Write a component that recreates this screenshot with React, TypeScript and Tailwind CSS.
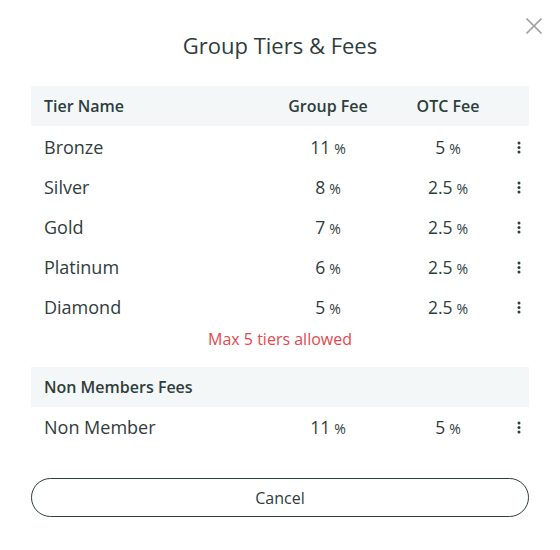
import React from "react";

const tiers = [
  { name: "Bronze", group: "11", otc: "5" },
  { name: "Silver", group: "8", otc: "2.5" },
  { name: "Gold", group: "7", otc: "2.5" },
  { name: "Platinum", group: "6", otc: "2.5" },
  { name: "Diamond", group: "5", otc: "2.5" },
];

function Kebab() {
  return (
    <svg width="4" height="13" viewBox="0 0 4 13" className="block">
      <circle cx="2" cy="2" r="1.5" fill="#2e3d3d" />
      <circle cx="2" cy="6.5" r="1.5" fill="#2e3d3d" />
      <circle cx="2" cy="11" r="1.5" fill="#2e3d3d" />
    </svg>
  );
}

function Pct({ v }: { v: string }) {
  return (
    <span className="whitespace-nowrap">
      <span className="text-[17.5px]">{v}</span>
      <span className="text-[14px] ml-[4px]">%</span>
    </span>
  );
}

function Row({ name, group, otc }: { name: string; group: string; otc: string }) {
  return (
    <div className="grid grid-cols-[247px_100px_20px_100px_1fr] h-[40px] items-center">
      <div className="pl-[13px] text-[18px]">{name}</div>
      <div className="flex justify-center">
        <Pct v={group} />
      </div>
      <div />
      <div className="flex justify-center">
        <Pct v={otc} />
      </div>
      <div className="flex justify-end pr-[8px]">
        <Kebab />
      </div>
    </div>
  );
}

export default function App() {
  return (
    <div
      className="relative w-[560px] h-[550px] bg-white text-[#2e3d3d]"
      style={{ fontFamily: '"Open Sans", "Noto Sans", sans-serif' }}
    >
      <button className="absolute left-[525px] top-[17px] w-[18px] h-[18px] flex items-center justify-center">
        <svg width="16" height="16" viewBox="0 0 16 16">
          <path d="M0.5 0.5L15.5 15.5M15.5 0.5L0.5 15.5" stroke="#a3a3a3" strokeWidth="1.6" />
        </svg>
      </button>

      <div className="pt-[30px] text-center text-[22px] leading-[30px]">Group Tiers &amp; Fees</div>

      <div className="mx-[31px] mt-[26px]">
        <div className="grid grid-cols-[247px_100px_20px_100px_1fr] h-[40px] items-center bg-[#f4f7f7] font-semibold text-[16px]">
          <div className="pl-[13px]">Tier Name</div>
          <div className="text-center">Group Fee</div>
          <div />
          <div className="text-center">OTC Fee</div>
          <div />
        </div>
        <div className="pt-px">
          {tiers.map((t) => (
            <Row key={t.name} {...t} />
          ))}
        </div>
        <div className="text-center text-[#e5484d] text-[16px] leading-[22px] mt-[1px]">Max 5 tiers allowed</div>

        <div className="mt-[17px] h-[40px] flex items-center bg-[#f4f7f7] font-semibold text-[16px] pl-[13px]">
          Non Members Fees
        </div>
        <Row name="Non Member" group="11" otc="5" />

        <button className="mt-[31px] w-full h-[39px] rounded-full border border-[#2e3d3d] text-[16px] flex items-center justify-center">
          Cancel
        </button>
      </div>
    </div>
  );
}
